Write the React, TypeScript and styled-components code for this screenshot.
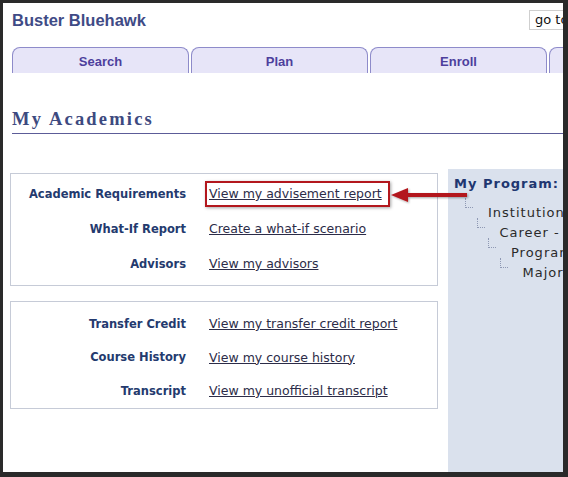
import React, { FC } from 'react';
import styled, { createGlobalStyle } from 'styled-components';

const GlobalStyle = createGlobalStyle`
  html, body {
    margin: 0;
    padding: 0;
    background: #2a2a2a;
  }
`;

// Data
const academicRows = [
  { label: 'Academic Requirements', link: 'View my advisement report', callout: true },
  { label: 'What-If Report', link: 'Create a what-if scenario' },
  { label: 'Advisors', link: 'View my advisors' },
];

const historyRows = [
  { label: 'Transfer Credit', link: 'View my transfer credit report' },
  { label: 'Course History', link: 'View my course history' },
  { label: 'Transcript', link: 'View my unofficial transcript' },
];

const programTree = ['Institution', 'Career -', 'Program', 'Major'];

const tabs = ['Search', 'Plan', 'Enroll', 'Finances'];

// Styled Components
const Frame = styled.div`
  width: 568px;
  height: 477px;
  box-sizing: border-box;
  border-style: solid;
  border-color: #2a2a2a;
  border-width: 3px 5px 5px 3px;
  background: #fff;
  overflow: hidden;
`;

const Page = styled.div`
  width: 636px;
  height: 100%;
  padding-left: 7px;
  box-sizing: border-box;
  display: flex;
  flex-direction: column;
`;

const Header = styled.div`
  display: flex;
  align-items: center;
  height: 20px;
  margin-top: 7px;
  padding-left: 2px;
`;

const UserName = styled.div`
  font-family: 'Liberation Sans', Arial, sans-serif;
  font-weight: bold;
  font-size: 16.5px;
  color: #3f4b86;
`;

const GoTo = styled.div`
  margin-left: auto;
  width: 110px;
  height: 20px;
  box-sizing: border-box;
  border: 1px solid #cfcfcf;
  padding-left: 5px;
  font-family: 'DejaVu Sans', Verdana, sans-serif;
  font-size: 13px;
  line-height: 18px;
  color: #111;
`;

const TabBar = styled.div`
  display: flex;
  gap: 2px;
  margin-top: 17px;
  padding-left: 2px;
`;

const Tab = styled.div`
  flex-shrink: 0;
  width: 177px;
  height: 26px;
  box-sizing: border-box;
  border: 1px solid #8e8bca;
  border-bottom: none;
  border-radius: 8px 8px 0 0;
  background: #e7e5f8;
  font-family: 'Liberation Sans', Arial, sans-serif;
  font-weight: bold;
  font-size: 13px;
  line-height: 27px;
  text-align: center;
  color: #4d3f9d;
`;

const PageTitle = styled.h1`
  margin: 35px 0 0 2px;
  padding-bottom: 3px;
  border-bottom: 1px solid #5c5c98;
  font-family: 'Liberation Serif', 'Times New Roman', serif;
  font-weight: bold;
  font-size: 18.5px;
  line-height: 22px;
  letter-spacing: 2.2px;
  color: #3d4a80;
`;

const Main = styled.div`
  position: relative;
  flex: 1;
  display: flex;
  margin-top: 35px;
`;

const LeftColumn = styled.div`
  width: 428px;
  flex-shrink: 0;
  padding-top: 4px;
  display: flex;
  flex-direction: column;
  gap: 15px;
`;

const LinkBox = styled.div<{ $pad: string }>`
  border: 1px solid #c6cbd7;
  padding: ${(p) => p.$pad};
  display: grid;
  grid-template-columns: 175px 1fr;
  column-gap: 23px;
`;

const Label = styled.div<{ $h: number }>`
  height: ${(p) => p.$h}px;
  display: flex;
  align-items: center;
  justify-content: flex-end;
  font-family: 'DejaVu Sans', Verdana, sans-serif;
  font-weight: bold;
  font-size: 11.5px;
  color: #243a6e;
`;

const LinkCell = styled.div<{ $h: number }>`
  height: ${(p) => p.$h}px;
  display: flex;
  align-items: center;
`;

const Link = styled.a<{ $callout?: boolean }>`
  position: relative;
  font-family: 'DejaVu Sans', Verdana, sans-serif;
  font-size: 12.5px;
  line-height: 15px;
  color: #2c2c48;
  text-decoration: underline;
  cursor: pointer;

  ${(p) =>
    p.$callout &&
    `
    &::after {
      content: '';
      position: absolute;
      left: -4px;
      right: -8px;
      top: -5px;
      bottom: -6px;
      border: 2px solid #b3171d;
      box-shadow: 1px 1px 3px rgba(0, 0, 0, 0.35);
    }
  `}
`;

const Arrow = styled.svg`
  position: absolute;
  left: 381px;
  top: 18px;
  overflow: visible;
`;

const ProgramPanel = styled.div`
  flex: 1;
  margin-left: 10px;
  background: #dae1ed;
  padding: 7px 0 0 6px;
`;

const PanelTitle = styled.div`
  font-family: 'DejaVu Sans', Verdana, sans-serif;
  font-weight: bold;
  font-size: 13px;
  line-height: 16px;
  letter-spacing: 1px;
  color: #203670;
  margin-bottom: 11px;
`;

const TreeItem = styled.div<{ $level: number }>`
  display: flex;
  align-items: flex-start;
  height: 20px;
  padding-left: ${(p) => 11 + p.$level * 11.5}px;
  font-family: 'DejaVu Sans', Verdana, sans-serif;
  font-size: 13px;
  line-height: 20px;
  letter-spacing: 1px;
  color: #2a2a2a;
`;

const Connector = styled.span`
  flex-shrink: 0;
  width: 7px;
  height: 9px;
  margin-top: -5px;
  margin-right: 15px;
  border-left: 1px dotted #8f99b4;
  border-bottom: 1px dotted #8f99b4;
`;

interface Row {
  label: string;
  link: string;
  callout?: boolean;
}

const RowGroup: FC<{ rows: Row[]; pad: string; h: number }> = ({ rows, pad, h }) => (
  <LinkBox $pad={pad}>
    {rows.map((r) => (
      <React.Fragment key={r.label}>
        <Label $h={h}>{r.label}</Label>
        <LinkCell $h={h}>
          <Link $callout={r.callout}>{r.link}</Link>
        </LinkCell>
      </React.Fragment>
    ))}
  </LinkBox>
);

const App: FC = () => {
  return (
    <>
      <GlobalStyle />
      <Frame>
        <Page>
          <Header>
            <UserName>Buster Bluehawk</UserName>
            <GoTo>go to ...</GoTo>
          </Header>

          <TabBar>
            {tabs.map((t) => (
              <Tab key={t}>{t}</Tab>
            ))}
          </TabBar>

          <PageTitle>My Academics</PageTitle>

          <Main>
            <LeftColumn>
              <RowGroup rows={academicRows} pad="2px 0 4px" h={35} />
              <RowGroup rows={historyRows} pad="5px 0 0" h={33.5} />
            </LeftColumn>

            <ProgramPanel>
              <PanelTitle>My Program:</PanelTitle>
              {programTree.map((item, i) => (
                <TreeItem key={item} $level={i}>
                  <Connector />
                  {item}
                </TreeItem>
              ))}
            </ProgramPanel>

            {/* annotation arrow pointing at the advisement link */}
            <Arrow width="76" height="16" viewBox="0 0 76 16">
              <defs>
                <filter id="arrowShadow" x="-10%" y="-50%" width="130%" height="200%">
                  <feDropShadow dx="1" dy="1" stdDeviation="1" floodOpacity="0.35" />
                </filter>
              </defs>
              <g filter="url(#arrowShadow)" fill="#b3171d">
                <polygon points="0,8 17,1 17,15" />
                <rect x="16" y="6" width="60" height="4" />
              </g>
            </Arrow>
          </Main>
        </Page>
      </Frame>
    </>
  );
};

export default App;
